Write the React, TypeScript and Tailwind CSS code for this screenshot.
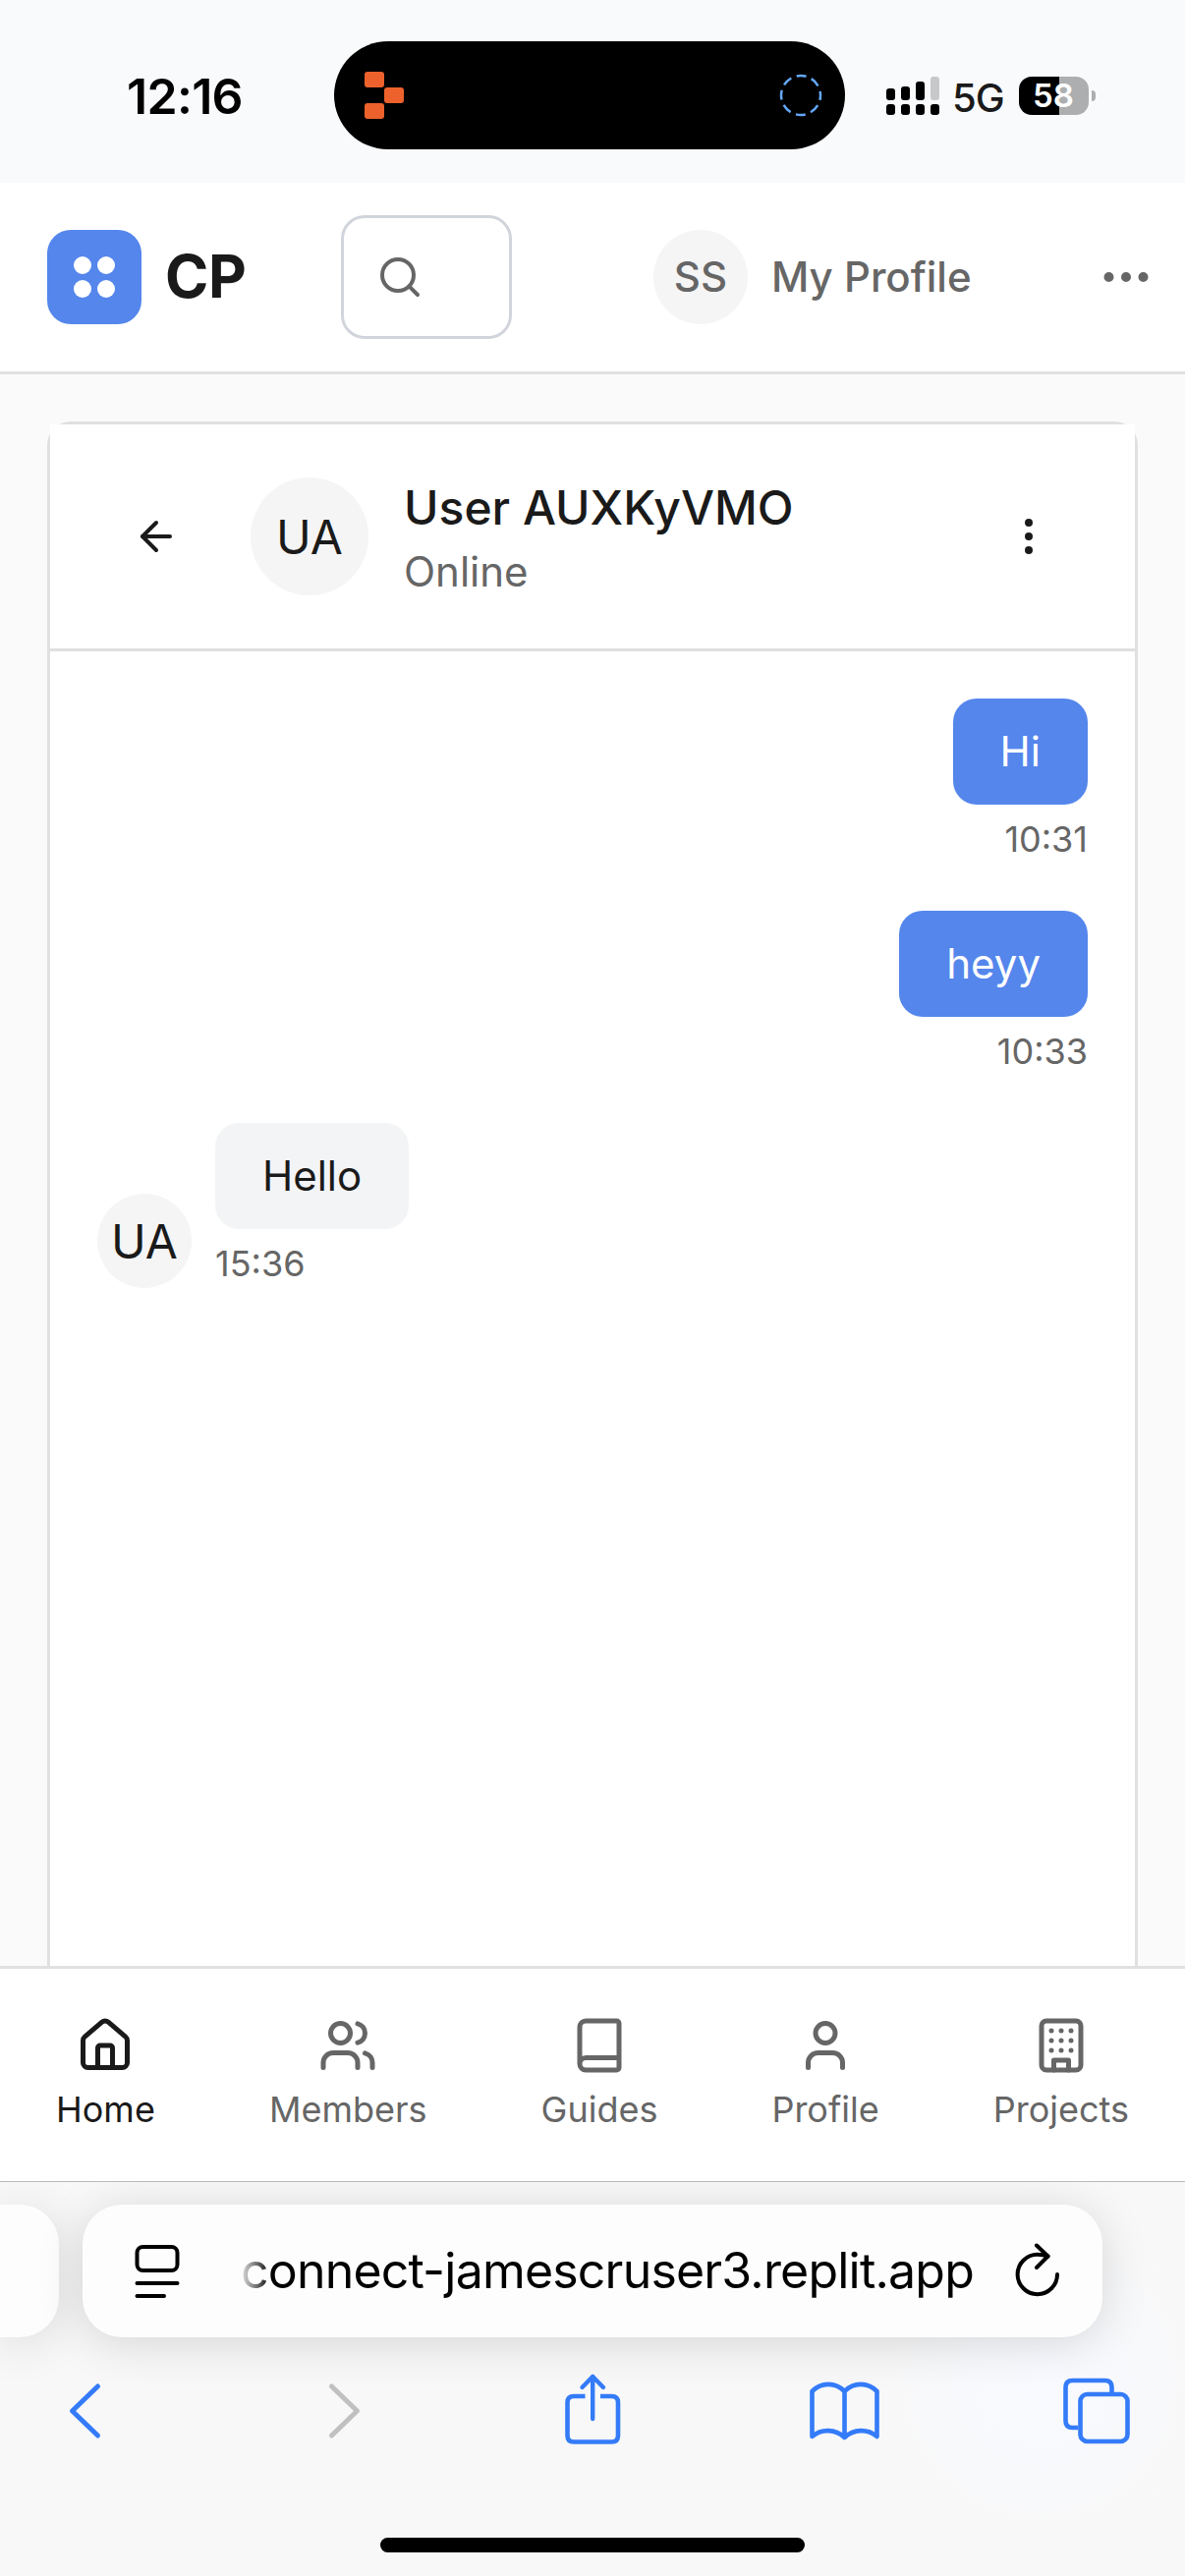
import type { ReactNode } from "react";
import {
  ArrowLeft,
  Book,
  Ellipsis,
  EllipsisVertical,
  House,
  Search,
  User,
  Users,
} from "lucide-react";

function StatusBar() {
  return (
    <div className="flex h-[186px] shrink-0 items-start bg-[#f9fafc]">
      <div className="w-[340px] pt-[68px] pl-[129px] text-[50px] leading-[60px] font-semibold text-black">
        <span className="tracking-[-0.7px]">12:16</span>
      </div>
      <div className="mt-[42px] flex h-[110px] w-[520px] items-center justify-between rounded-full bg-black pr-[23px] pl-[31px]">
        <svg width="40" height="48" viewBox="0 0 40 48" fill="#ec612c">
          <rect x="0" y="0" width="20" height="16" rx="3" />
          <rect x="20" y="16" width="20" height="16" rx="3" />
          <rect x="0" y="32" width="20" height="16" rx="3" />
        </svg>
        <svg width="44" height="44" viewBox="0 0 44 44" fill="none">
          <circle
            cx="22"
            cy="22"
            r="20"
            stroke="#64a8f8"
            strokeWidth="2.5"
            strokeDasharray="10 5.708"
            strokeDashoffset="5"
          />
        </svg>
      </div>
      <div className="flex items-start pt-[78px] pl-[42px]">
        <svg width="54" height="39" viewBox="0 0 54 39">
          <rect x="0" y="12" width="9" height="12" rx="3" />
          <rect x="15" y="10" width="9" height="14" rx="3" />
          <rect x="30" y="5" width="9" height="19" rx="3" />
          <rect x="45" y="0" width="9" height="24" rx="3" fill="#c7c8c9" />
          <rect x="0" y="28" width="9" height="11" rx="3" />
          <rect x="15" y="28" width="9" height="11" rx="3" />
          <rect x="30" y="28" width="9" height="11" rx="3" />
          <rect x="45" y="28" width="9" height="11" rx="3" />
        </svg>
        <span className="ml-[13px] w-[52px] text-[40px] leading-[44px] font-medium tracking-[-1px]">
          5G
        </span>
        <div className="ml-[16px] flex h-[39px] w-[71px] items-center justify-center rounded-[13px] bg-linear-to-r from-black from-58% to-[#adaeb0] to-58% pr-px text-[33px] leading-[39px] font-semibold text-white">
          58
        </div>
        <div className="mt-[14px] ml-[3px] h-[11px] w-[4px] rounded-r-full bg-[#adaeb0]" />
      </div>
    </div>
  );
}

function AppHeader() {
  return (
    <header className="flex h-[195px] shrink-0 items-center border-b-3 border-[#e0e0e0] bg-white pl-12">
      <div className="flex size-24 items-center justify-center rounded-[24px] bg-[#5486ec]">
        <div className="grid grid-cols-2 gap-1.5">
          <i className="size-[18px] rounded-full bg-white" />
          <i className="size-[18px] rounded-full bg-white" />
          <i className="size-[18px] rounded-full bg-white" />
          <i className="size-[18px] rounded-full bg-white" />
        </div>
      </div>
      <span className="mb-[2px] ml-6 w-[179px] text-[60px] leading-[84px] font-bold tracking-[-0.5px]">
        CP
      </span>
      <div className="flex h-[126px] w-[174px] items-center rounded-[24px] border-3 border-[#d1d5db] pl-[33px] text-[#666]">
        <Search size={48} />
      </div>
      <div className="ml-36 flex items-center gap-6 text-[42px] leading-[60px] font-medium text-[#666]">
        <div className="flex size-24 items-center justify-center rounded-full bg-[#f5f5f5]">
          SS
        </div>
        <span className="w-[331px] whitespace-nowrap">My Profile</span>
        <Ellipsis size={60} className="-ml-6" />
      </div>
    </header>
  );
}

function ChatHeader() {
  return (
    <div className="flex h-[231px] shrink-0 items-center border-b-3 border-[#e0e0e0] bg-white pr-[84px] pl-[84px]">
      <ArrowLeft size={48} />
      <div className="ml-[72px] flex size-[120px] items-center justify-center rounded-full bg-[#f5f5f5] pt-[2px] text-[48px]">
        UA
      </div>
      <div className="ml-9 flex-1">
        <div className="-mb-px pt-px text-[48px] leading-[72px] font-medium">User AUXKyVMO</div>
        <div className="text-[42px] leading-[60px] text-[#666]">Online</div>
      </div>
      <EllipsisVertical size={48} />
    </div>
  );
}

function SentMessage({ text, time }: { text: string; time: string }) {
  return (
    <div className="flex flex-col items-end gap-3">
      <div className="rounded-[24px] bg-[#5486ec] px-12 py-6 text-[42px] leading-[60px] text-white">
        {text}
      </div>
      <div className="pb-[2px] text-[36px] leading-[46px] text-[#666]">{time}</div>
    </div>
  );
}

function ReceivedMessage({ text, time }: { text: string; time: string }) {
  return (
    <div className="flex items-end gap-6">
      <div className="flex size-24 items-center justify-center rounded-full bg-[#f5f5f5] pt-[2px] text-[48px]">
        UA
      </div>
      <div className="flex flex-col items-start gap-3">
        <div className="rounded-[24px] bg-[#f3f4f6] px-12 py-6 text-[42px] leading-[60px]">
          {text}
        </div>
        <div className="pb-[2px] text-[36px] leading-[46px] text-[#666]">{time}</div>
      </div>
    </div>
  );
}

function BuildingIcon() {
  return (
    <svg
      width="60"
      height="60"
      viewBox="0 0 24 24"
      fill="none"
      stroke="currentColor"
      strokeWidth="2"
      strokeLinecap="round"
      strokeLinejoin="round"
    >
      <rect width="16" height="20" x="4" y="2" rx="2" />
      <path d="M9 22v-4h6v4M8 6h.01M16 6h.01M12 6h.01M12 10h.01M12 14h.01M16 10h.01M16 14h.01M8 10h.01M8 14h.01" />
    </svg>
  );
}

function NavItem({ icon, label, active }: { icon: ReactNode; label: string; active?: boolean }) {
  return (
    <div
      className={`flex flex-col items-center gap-3 ${active ? "text-[#1a1a1a]" : "text-[#666]"}`}
    >
      {icon}
      <span className="text-[36px] leading-[46px]">{label}</span>
    </div>
  );
}

function BottomNav() {
  return (
    <nav className="flex h-[219px] shrink-0 items-start justify-between border-t-3 border-[#e0e0e0] bg-white px-[57px] pt-12">
      <NavItem icon={<House size={60} />} label="Home" active />
      <NavItem icon={<Users size={60} />} label="Members" />
      <NavItem icon={<Book size={60} />} label="Guides" />
      <NavItem icon={<User size={60} />} label="Profile" />
      <NavItem icon={<BuildingIcon />} label="Projects" />
    </nav>
  );
}

function BrowserBar() {
  return (
    <div className="h-[402px] shrink-0 overflow-hidden border-t border-[#b9b9b9] bg-[#f8f8f8] bg-[radial-gradient(circle_at_1060px_200px,#f8faff_0,#f8f8f8_170px)]">
      <div className="flex pt-[23px]">
        <div className="h-[135px] w-[60px] rounded-r-[40px] bg-[#fdfdfd] shadow-[0_6px_48px_rgba(0,0,0,0.12)]" />
        <div className="ml-6 flex h-[135px] w-[1038px] items-center rounded-[40px] bg-[#fdfdfd] pl-[53px] text-black shadow-[0_6px_48px_rgba(0,0,0,0.14)]">
          <svg
            width="46"
            height="56"
            viewBox="0 0 46 56"
            fill="none"
            stroke="currentColor"
            strokeWidth="4"
            strokeLinecap="round"
          >
            <rect x="2.5" y="3" width="41" height="24" rx="6" />
            <path d="M2.5 40H43.5M2.5 53H30" />
          </svg>
          <span className="mb-[2px] ml-[59px] w-[762px] mask-[linear-gradient(to_right,transparent_0,black_34px)] pl-[3px] text-[50px] leading-[64px] tracking-[-0.8px] whitespace-nowrap">
            connect-jamescruser3.replit.app
          </span>
          <svg
            className="mb-[4px] ml-[29px]"
            width="46"
            height="56"
            viewBox="0 0 46 56"
            fill="none"
            stroke="currentColor"
            strokeWidth="4"
            strokeLinecap="round"
            strokeLinejoin="round"
          >
            <path d="M43 33A20.2 20.2 0 1 1 22.8 12.8C27 12.8 30.5 13.5 33.5 14.5" />
            <path d="M22 3.5L33.5 14.5L22 26" />
          </svg>
        </div>
      </div>
      <div className="flex pt-[31px] text-[#347bf8]">
        <svg
          width="1206"
          height="90"
          viewBox="0 0 1206 90"
          fill="none"
          stroke="currentColor"
          strokeWidth="4.6"
          strokeLinecap="round"
          strokeLinejoin="round"
        >
          <path d="M99.5 19L73.5 44L99.5 69" strokeWidth="5" />
          <path d="M337.5 19L363.5 44L337.5 69" stroke="#c0c0c0" strokeWidth="5" />
          <path
            d="M595.5 29H584Q577.5 29 577.5 35.5V69Q577.5 75.5 584 75.5H622.5Q629 75.5 629 69V35.5Q629 29 622.5 29H611"
            strokeLinecap="butt"
          />
          <path d="M603.2 52V9M592.5 20L603.2 9L614 20" strokeWidth="4.4" />
          <path d="M859.5 24C850 14.5 836 14.5 826.5 24V70C836 62 850 62 859.5 71C869 62 883 62 892.5 70V24C883 14.5 869 14.5 859.5 24V71" />
          <rect x="1099.5" y="27" width="48" height="48" rx="7" />
          <path
            d="M1131.5 25V20Q1131.5 13 1124.5 13H1091.5Q1084.5 13 1084.5 20V54Q1084.5 61 1091.5 61H1097"
            strokeLinecap="butt"
          />
        </svg>
      </div>
      <div className="mx-auto mt-[83px] h-[15px] w-[432px] rounded-full bg-black" />
    </div>
  );
}

export default function App() {
  return (
    <div
      className="flex h-[2622px] w-[1206px] flex-col overflow-hidden bg-[#fafafa] text-[#1a1a1a] antialiased"
      style={{ fontFamily: "Inter, 'Liberation Sans', sans-serif", fontOpticalSizing: "none" }}
    >
      <StatusBar />
      <AppHeader />
      <main className="flex min-h-0 flex-1 flex-col px-12 pt-12">
        <div className="flex flex-1 flex-col rounded-t-[24px] border-3 border-b-0 border-[#e0e0e0] bg-white">
          <ChatHeader />
          <div className="flex flex-col gap-12 p-12">
            <SentMessage text="Hi" time="10:31" />
            <SentMessage text="heyy" time="10:33" />
            <ReceivedMessage text="Hello" time="15:36" />
          </div>
        </div>
      </main>
      <BottomNav />
      <BrowserBar />
    </div>
  );
}
